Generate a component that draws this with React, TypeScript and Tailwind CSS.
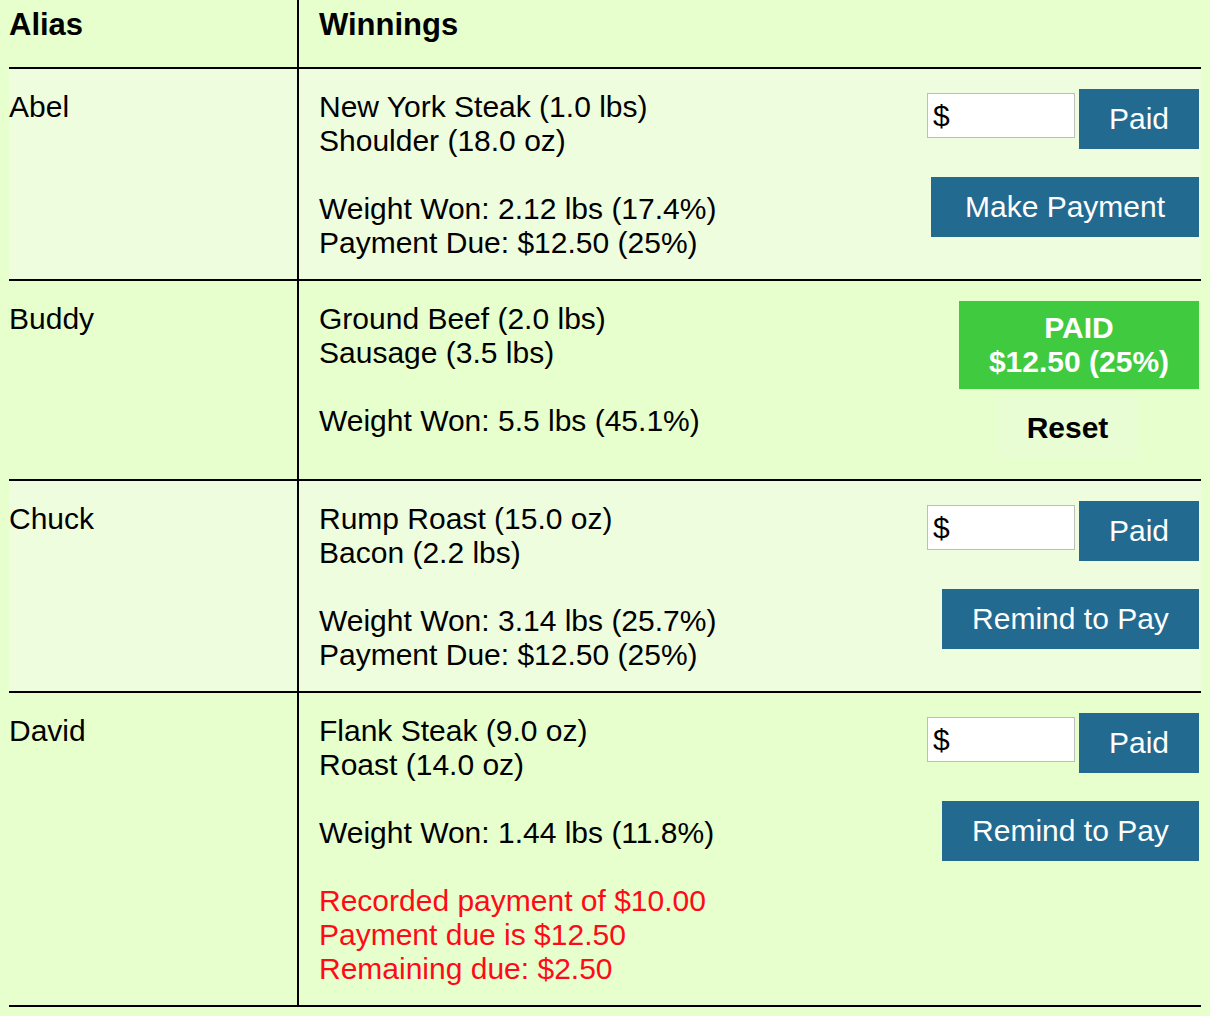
import React from "react";

interface Entry {
  alias: string;
  items: string[];
  weight: string;
  due?: string;
  status: "make" | "paid" | "remind";
  notes?: string[];
}

const entries: Entry[] = [
  {
    alias: "Abel",
    items: ["New York Steak (1.0 lbs)", "Shoulder (18.0 oz)"],
    weight: "Weight Won: 2.12 lbs (17.4%)",
    due: "Payment Due: $12.50 (25%)",
    status: "make",
  },
  {
    alias: "Buddy",
    items: ["Ground Beef (2.0 lbs)", "Sausage (3.5 lbs)"],
    weight: "Weight Won: 5.5 lbs (45.1%)",
    status: "paid",
  },
  {
    alias: "Chuck",
    items: ["Rump Roast (15.0 oz)", "Bacon (2.2 lbs)"],
    weight: "Weight Won: 3.14 lbs (25.7%)",
    due: "Payment Due: $12.50 (25%)",
    status: "remind",
  },
  {
    alias: "David",
    items: ["Flank Steak (9.0 oz)", "Roast (14.0 oz)"],
    weight: "Weight Won: 1.44 lbs (11.8%)",
    status: "remind",
    notes: ["Recorded payment of $10.00", "Payment due is $12.50", "Remaining due: $2.50"],
  },
];

const BlueButton = ({ label, width }: { label: string; width: string }) => (
  <div className={`${width} h-[60px] bg-[#236a91] text-white flex items-center justify-center`}>
    {label}
  </div>
);

const Actions = ({ status }: { status: Entry["status"] }) => {
  if (status === "paid") {
    return (
      <div className="flex flex-col items-end mb-[1px]">
        <div className="w-[240px] h-[88px] bg-[#3fca40] text-white font-bold flex flex-col items-center justify-center">
          <span>PAID</span>
          <span>$12.50 (25%)</span>
        </div>
        <div className="mt-[8px] mr-[61px] w-[141px] h-[61px] bg-[#e9fdd5] font-bold text-black flex items-center justify-center">
          Reset
        </div>
      </div>
    );
  }
  return (
    <div className="flex flex-col items-end gap-[28px]">
      <div className="flex items-start gap-[4px]">
        <div className="mt-[4px] w-[148px] h-[45px] bg-white border border-[#bdbdbd] pl-[5px] flex items-center text-black">
          $
        </div>
        <BlueButton label="Paid" width="w-[120px]" />
      </div>
      {status === "make" ? (
        <BlueButton label="Make Payment" width="w-[268px]" />
      ) : (
        <BlueButton label="Remind to Pay" width="w-[257px]" />
      )}
    </div>
  );
};

export default function App() {
  return (
    <div
      className="min-h-screen bg-[#e6ffcc] pl-[9px] text-[30px] leading-[34px] text-black"
      style={{ fontFamily: '"Liberation Sans", Arial, sans-serif' }}
    >
      <div className="w-[1192px]">
        {/* header */}
        <div className="flex h-[69px] border-b-2 border-black text-[31px] leading-[36px] font-bold">
          <div className="w-[290px] border-r-2 border-black pt-[7px]">Alias</div>
          <div className="pl-[20px] pt-[7px]">Winnings</div>
        </div>

        {entries.map((e, i) => (
          <div
            key={e.alias}
            className={`flex border-b-2 border-black ${i % 2 === 0 ? "bg-[#effddf]" : ""}`}
          >
            <div className="w-[290px] shrink-0 border-r-2 border-black pt-[21px]">{e.alias}</div>
            <div className="flex-1 flex justify-between pl-[20px] pr-[2px] pt-[20px] pb-[20px]">
              <div className="flex flex-col gap-[34px] pt-[1px] mb-[-1px]">
                <div className="flex flex-col">
                  {e.items.map((it) => (
                    <span key={it}>{it}</span>
                  ))}
                </div>
                <div className="flex flex-col">
                  <span>{e.weight}</span>
                  {e.due && <span>{e.due}</span>}
                </div>
                {e.notes && (
                  <div className="flex flex-col text-[#ff0a18]">
                    {e.notes.map((n) => (
                      <span key={n}>{n}</span>
                    ))}
                  </div>
                )}
              </div>
              <Actions status={e.status} />
            </div>
          </div>
        ))}
      </div>
    </div>
  );
}
